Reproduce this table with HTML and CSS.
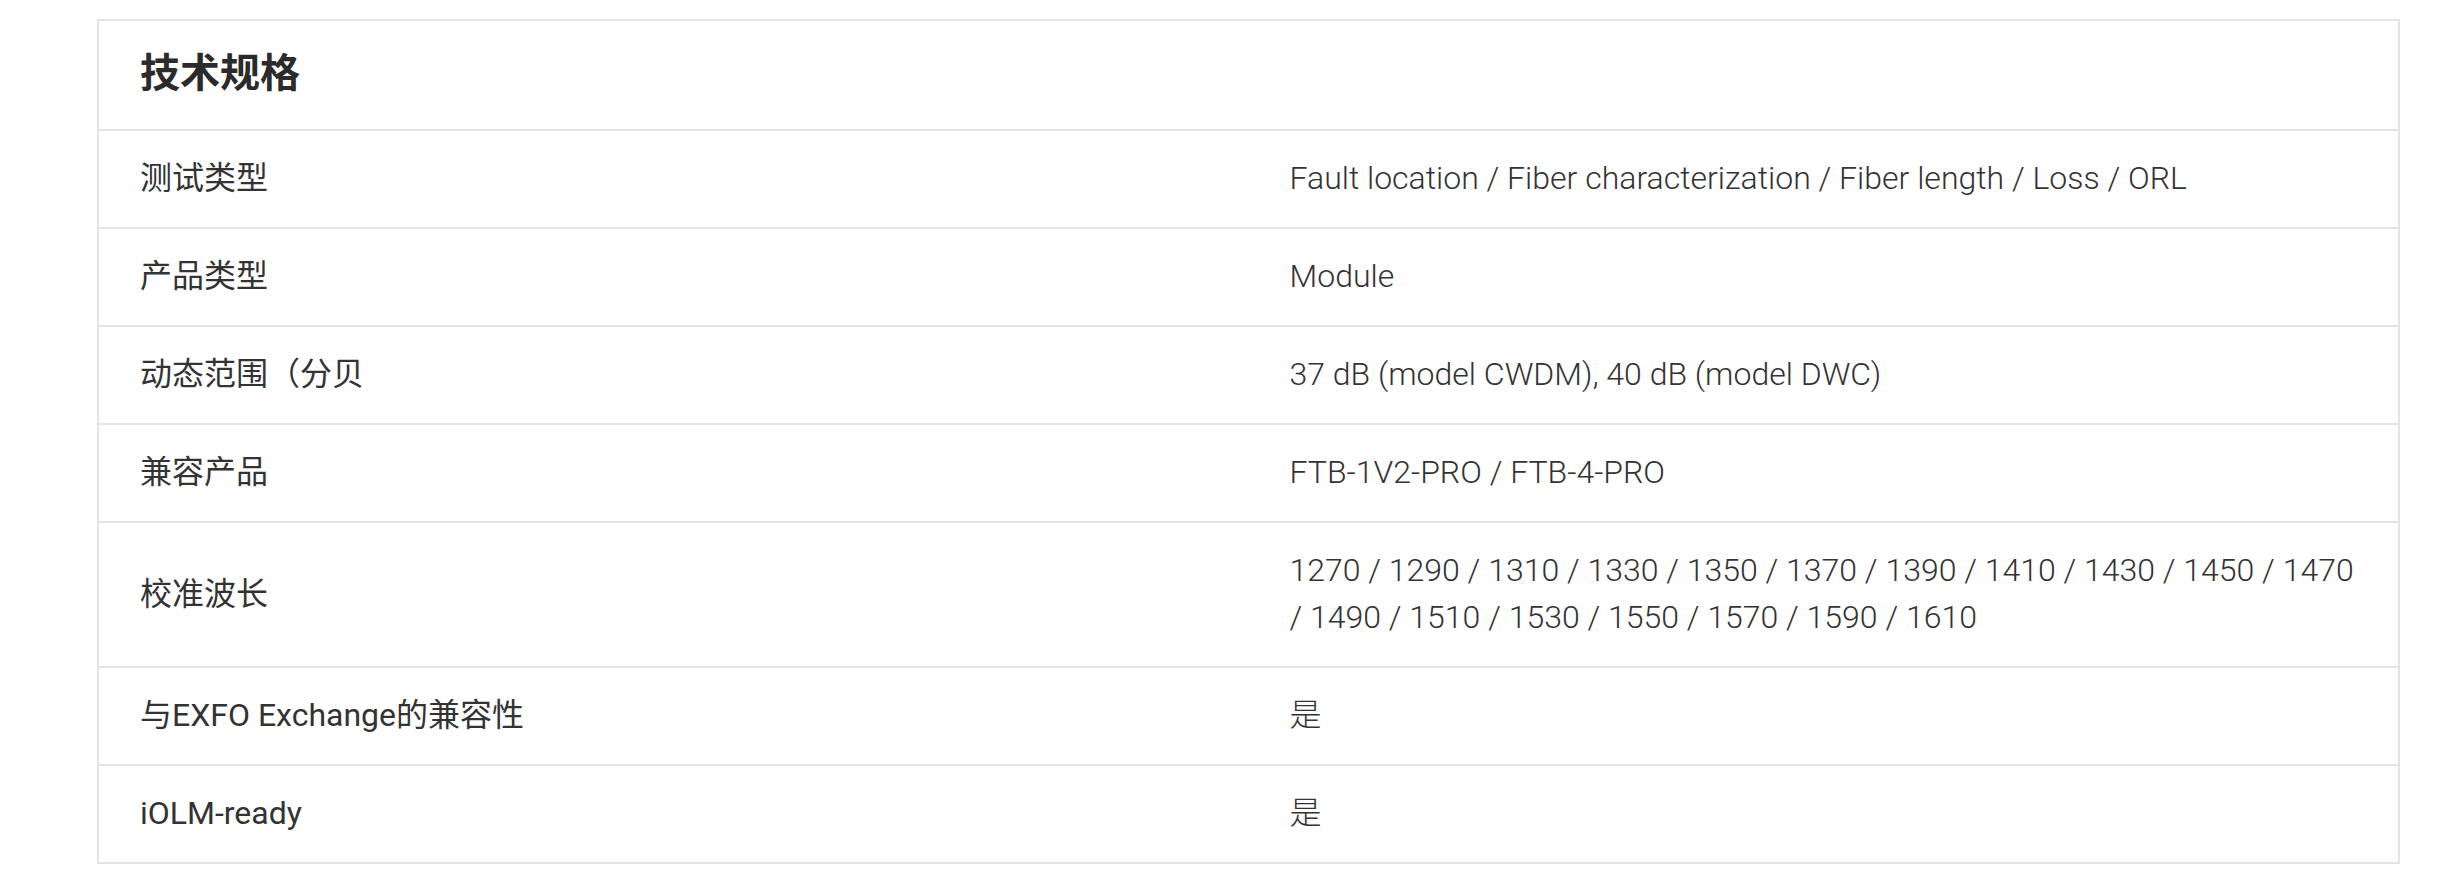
FILE: index.html
```html
<!DOCTYPE html>
<html lang="zh-CN">
  <head>
    <meta charset="UTF-8" />
    <meta name="viewport" content="width=device-width, initial-scale=1.0" />
    <link rel="stylesheet" href="styles.css">
    <title>技术规格</title>
  </head>
  <body>
    <div class="specs">
      <div class="specs-title">技术规格</div>
      <div class="spec-row">
        <div class="spec-label">测试类型</div>
        <div class="spec-value">Fault location / Fiber characterization / Fiber length / Loss / ORL</div>
      </div>
      <div class="spec-row">
        <div class="spec-label">产品类型</div>
        <div class="spec-value">Module</div>
      </div>
      <div class="spec-row">
        <div class="spec-label">动态范围（分贝</div>
        <div class="spec-value">37 dB (model CWDM), 40 dB (model DWC)</div>
      </div>
      <div class="spec-row">
        <div class="spec-label">兼容产品</div>
        <div class="spec-value">FTB-1V2-PRO / FTB-4-PRO</div>
      </div>
      <div class="spec-row">
        <div class="spec-label">校准波长</div>
        <div class="spec-value">1270 / 1290 / 1310 / 1330 / 1350 / 1370 / 1390 / 1410 / 1430 / 1450 / 1470 / 1490 / 1510 / 1530 / 1550 / 1570 / 1590 / 1610</div>
      </div>
      <div class="spec-row">
        <div class="spec-label">与EXFO Exchange的兼容性</div>
        <div class="spec-value">是</div>
      </div>
      <div class="spec-row">
        <div class="spec-label">iOLM-ready</div>
        <div class="spec-value">是</div>
      </div>
    </div>
  </body>
</html>
```

FILE: styles.css
```css
body {
  margin: 0;
  padding: 19px 0 0 97px;
  background-color: #fff;
  color: #333;
  font-family: Roboto, "Noto Sans CJK SC", sans-serif;
}

.specs {
  width: 2303px;
  box-sizing: border-box;
  border: 2px solid #e4e4e4;
}

.specs-title {
  display: flex;
  align-items: center;
  box-sizing: border-box;
  height: 108px;
  padding: 0 41px 10px;
  font-size: 40px;
  font-weight: 600;
  color: #2b2b2b;
}

.spec-row {
  display: grid;
  grid-template-columns: 1fr 1fr;
  border-top: 2px solid #e4e4e4;
}

.spec-label,
.spec-value {
  display: flex;
  align-items: center;
  padding: 24px 41px 25px;
  font-size: 32px;
  line-height: 47px;
}

.spec-label {
  color: #333;
}

.spec-value {
  font-weight: 300;
  color: #333;
}
```
